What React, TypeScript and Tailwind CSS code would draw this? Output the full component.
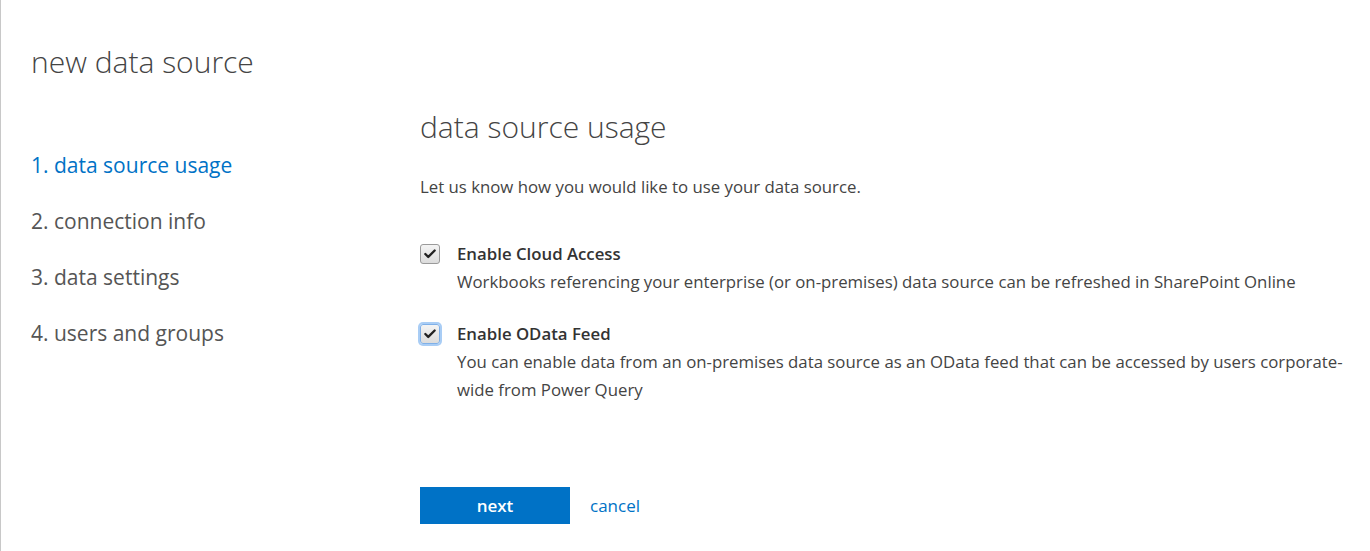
import { Check } from 'lucide-react'

const steps = ['1. data source usage', '2. connection info', '3. data settings', '4. users and groups']

function Checkbox({ focused }: { focused?: boolean }) {
  return (
    <span
      className={
        'mt-[4px] flex h-[20px] w-[20px] shrink-0 items-center justify-center rounded-[3px] border bg-gradient-to-b from-[#f4f4f4] to-[#dcdcdc] ' +
        (focused ? 'border-[#7fb0e8] shadow-[0_0_0_2px_#a9cdf5]' : 'border-[#9a9a9a]')
      }
    >
      <Check className="h-[14px] w-[14px] text-[#222]" strokeWidth={4} />
    </span>
  )
}

export default function App() {
  return (
    <div className="h-[551px] w-[1370px] overflow-hidden border-l border-[#c8c8c8] bg-white font-['Open_Sans','Noto_Sans',sans-serif] text-[#444]">
      <h1 className="pl-[30px] pt-[40px] text-[30px] font-light leading-[44px] text-[#444]">new data source</h1>

      <div className="flex pt-[23px]">
        <ul className="w-[419px] shrink-0 pl-[30px] pt-[44px] text-[21px] leading-[28px]">
          {steps.map((s, i) => (
            <li key={s} className={'mb-[28px] ' + (i === 0 ? 'text-[#0072c6]' : 'text-[#555]')}>
              {s}
            </li>
          ))}
        </ul>

        <div className="w-[940px]">
          <h2 className="text-[30px] font-light leading-[40px] text-[#444]">data source usage</h2>
          <p className="mt-[29px] text-[16.8px] leading-[22px]">Let us know how you would like to use your data source.</p>

          <div className="mt-[42px] flex gap-[17px]">
            <Checkbox />
            <div className="text-[16.8px] leading-[28px]">
              <div className="font-semibold text-[#333]">Enable Cloud Access</div>
              <div>Workbooks referencing your enterprise (or on-premises) data source can be refreshed in SharePoint Online</div>
            </div>
          </div>

          <div className="mt-[24px] flex gap-[17px]">
            <Checkbox focused />
            <div className="w-[892px] text-[16.8px] leading-[28px]">
              <div className="font-semibold text-[#333]">Enable OData Feed</div>
              <div>
                You can enable data from an on-premises data source as an OData feed that can be accessed by users corporate-wide
                from Power Query
              </div>
            </div>
          </div>

          <div className="mt-[83px] flex items-center gap-[20px]">
            <button className="h-[37px] w-[150px] bg-[#0072c6] text-[17px] font-semibold text-white">next</button>
            <a className="text-[17px] text-[#0072c6]">cancel</a>
          </div>
        </div>
      </div>
    </div>
  )
}
